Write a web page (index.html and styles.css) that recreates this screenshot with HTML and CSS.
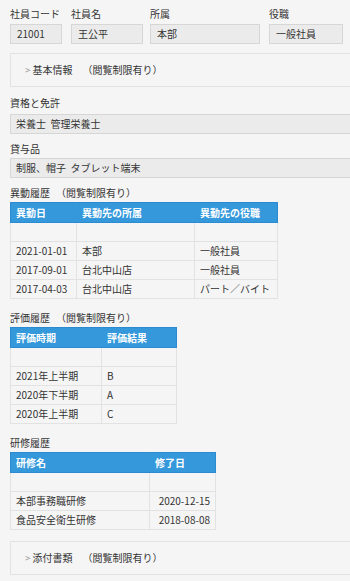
FILE: index.html
```html
<!DOCTYPE html>
<html lang="ja">
<head>
  <meta charset="UTF-8" />
  <meta name="viewport" content="width=device-width, initial-scale=1.0" />
  <title>社員情報</title>
  <link rel="stylesheet" href="styles.css">
</head>
<body>
  <main class="sheet">
    <div class="fields">
      <div class="field code">
        <div class="label">社員コード</div>
        <div class="value">21001</div>
      </div>
      <div class="field name">
        <div class="label">社員名</div>
        <div class="value">王公平</div>
      </div>
      <div class="field dept">
        <div class="label">所属</div>
        <div class="value">本部</div>
      </div>
      <div class="field role">
        <div class="label">役職</div>
        <div class="value">一般社員</div>
      </div>
    </div>

    <div class="panel panel-basic">
      <span class="chev">&gt;</span>基本情報<span class="note">（閲覧制限有り）</span>
    </div>

    <div class="block">
      <div class="label">資格と免許</div>
      <div class="value wide">栄養士&nbsp;&nbsp;管理栄養士</div>
    </div>
    <div class="block">
      <div class="label">貸与品</div>
      <div class="value wide">制服、帽子&nbsp;&nbsp;タブレット端末</div>
    </div>

    <section class="history transfers">
      <h2>異動履歴<span class="note">（閲覧制限有り）</span></h2>
      <table>
        <thead>
          <tr><th class="c1">異動日</th><th class="c2">異動先の所属</th><th class="c3">異動先の役職</th></tr>
        </thead>
        <tbody>
          <tr><td></td><td></td><td></td></tr>
          <tr><td>2021-01-01</td><td>本部</td><td>一般社員</td></tr>
          <tr><td>2017-09-01</td><td>台北中山店</td><td>一般社員</td></tr>
          <tr><td>2017-04-03</td><td>台北中山店</td><td>パート／バイト</td></tr>
        </tbody>
      </table>
    </section>

    <section class="history reviews">
      <h2>評価履歴<span class="note">（閲覧制限有り）</span></h2>
      <table>
        <thead>
          <tr><th class="c1">評価時期</th><th class="c2">評価結果</th></tr>
        </thead>
        <tbody>
          <tr><td></td><td></td></tr>
          <tr><td>2021年上半期</td><td>B</td></tr>
          <tr><td>2020年下半期</td><td>A</td></tr>
          <tr><td>2020年上半期</td><td>C</td></tr>
        </tbody>
      </table>
    </section>

    <section class="history trainings">
      <h2>研修履歴</h2>
      <table>
        <thead>
          <tr><th class="c1">研修名</th><th class="c2">修了日</th></tr>
        </thead>
        <tbody>
          <tr><td></td><td></td></tr>
          <tr><td>本部事務職研修</td><td>2020-12-15</td></tr>
          <tr><td>食品安全衛生研修</td><td>2018-08-08</td></tr>
        </tbody>
      </table>
    </section>

    <div class="panel panel-files">
      <span class="chev">&gt;</span>添付書類<span class="note">（閲覧制限有り）</span>
    </div>
  </main>
</body>
</html>
```

FILE: styles.css
```css
* {
  margin: 0;
  padding: 0;
  box-sizing: border-box;
}
html, body {
  background: #f5f5f5;
  overflow: hidden;
}
body {
  font-family: "Noto Sans CJK JP", "Noto Sans", sans-serif;
  font-size: 10px;
  line-height: 14px;
  color: #333;
}
.sheet {
  padding: 7px 0 0 10px;
  width: 370px;
}
.label {
  margin-bottom: 3px;
}
.value {
  height: 20px;
  line-height: 18px;
  padding: 0 5px;
  background: #ebebeb;
  border: 1px solid #d6d6d6;
  white-space: nowrap;
}

/* top row of fields */
.fields {
  display: flex;
}
.field.code { width: 52px; margin-right: 9px; }
.field.name { width: 72px; margin-right: 7px; }
.field.dept { width: 110px; margin-right: 9px; }
.field.role { width: 74px; }
.field .value {
  padding-left: 6px;
}

/* collapsible panels */
.panel {
  height: 34px;
  line-height: 32px;
  margin-top: 9px;
  padding-left: 14px;
  background: #f5f5f5;
  border: 1px solid #e2e2e2;
}
.chev {
  color: #999;
  margin-right: 2px;
}
.note {
  margin-left: 6px;
}
.panel .note {
  margin-left: 10px;
}

.block {
  margin-top: 9px;
}
.block .label {
  margin-bottom: 4px;
}
.block + .block {
  margin-top: 8px;
}
.block + .block .label {
  margin-bottom: 2px;
}

/* history tables */
.history {
  margin-top: 12px;
}
.history.transfers {
  margin-top: 8px;
}
.history h2 {
  font-size: 10px;
  font-weight: normal;
  line-height: 14px;
  margin-bottom: 2px;
}
table {
  border-collapse: collapse;
  table-layout: fixed;
}
th {
  background: #3498db;
  color: #fff;
  font-weight: bold;
  text-align: left;
  line-height: 14px;
  padding: 3px 5px 2px;
  border: 1px solid #2c8ad0;
  border-right-color: #3498db;
}
th:last-child {
  border-right-color: #2c8ad0;
}
td {
  line-height: 14px;
  padding: 2px 5px;
  border: 1px solid #e2e2e2;
  white-space: nowrap;
}
td:empty::before {
  content: "\00a0";
}
.transfers table { width: 267px; }
.transfers .c1 { width: 66px; }
.transfers .c2 { width: 118px; }
.transfers .c3 { width: 83px; }
.reviews table { width: 166px; }
.reviews .c1 { width: 91px; }
.reviews .c2 { width: 75px; }
.trainings table { width: 205px; }
.trainings .c1 { width: 139px; }
.trainings .c2 { width: 66px; }
.trainings td:last-child { text-align: right; }
.panel-files {
  margin-top: 11px;
}
```
